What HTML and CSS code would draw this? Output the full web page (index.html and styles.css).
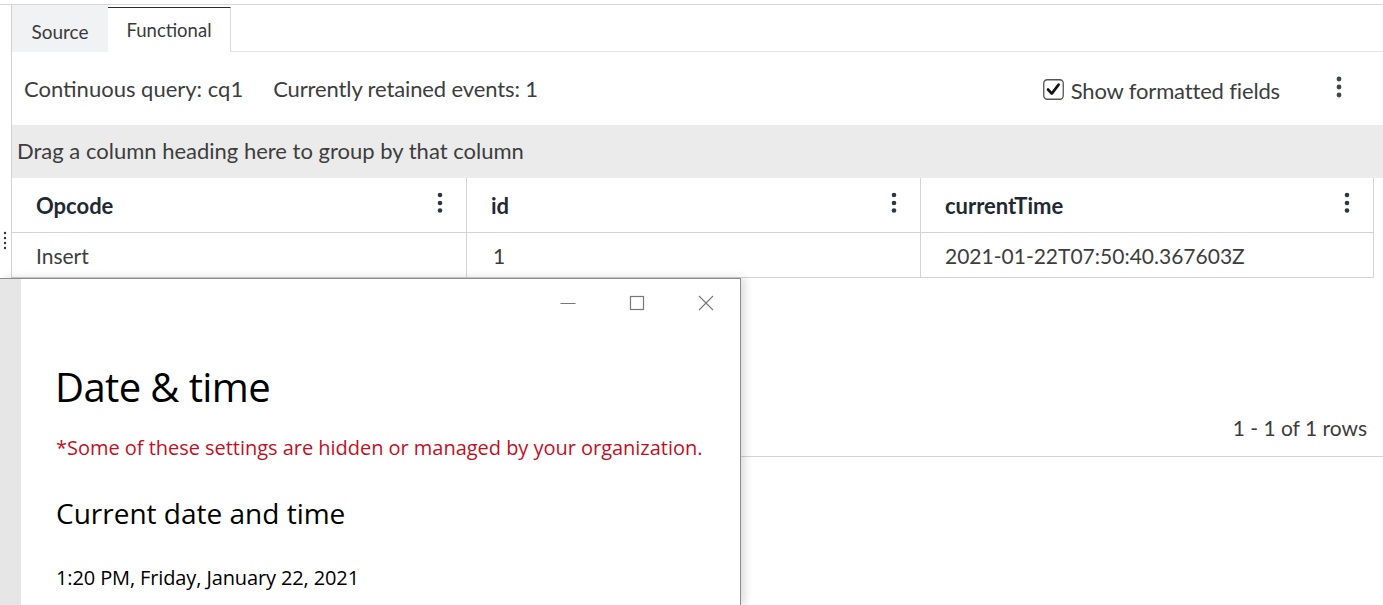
FILE: index.html
```html
<!DOCTYPE html>
<html>
<head>
<meta charset="utf-8">
<link rel="stylesheet" href="styles.css">
</head>
<body>
<div class="page">
  <div class="frame">
    <div class="gutter"></div>
    <div class="main">
      <div class="tabbar">
        <div class="tab tab-source">Source</div>
        <div class="tab tab-active">Functional</div>
        <div class="tab-fill"></div>
      </div>
      <div class="toolbar">
        <span class="info">Continuous query: cq1</span>
        <span class="info info-2">Currently retained events: 1</span>
        <span class="spacer"></span>
        <label class="check">
          <svg class="checkbox" width="21" height="21" viewBox="0 0 21 21"><rect x="0.75" y="0.75" width="19.5" height="19.5" rx="3.5" fill="#fff" stroke="#555" stroke-width="1.3"/><path d="M5 10.5 L8.8 14.6 L15.6 5.6" fill="none" stroke="#111" stroke-width="2.6" stroke-linecap="round" stroke-linejoin="round"/></svg>
          <span class="check-label">Show formatted fields</span>
        </label>
        <svg class="kebab kebab-top" width="6" height="22" viewBox="0 0 6 22"><circle cx="3" cy="3" r="2.4"/><circle cx="3" cy="11" r="2.4"/><circle cx="3" cy="19" r="2.4"/></svg>
      </div>
      <div class="groupbar">Drag a column heading here to group by that column</div>
      <div class="grid">
        <div class="row head">
          <div class="cell"><span>Opcode</span><svg class="kebab" width="6" height="22" viewBox="0 0 6 22"><circle cx="3" cy="3" r="2.3"/><circle cx="3" cy="11" r="2.3"/><circle cx="3" cy="18.5" r="2.3"/></svg></div>
          <div class="cell"><span>id</span><svg class="kebab" width="6" height="22" viewBox="0 0 6 22"><circle cx="3" cy="3" r="2.3"/><circle cx="3" cy="11" r="2.3"/><circle cx="3" cy="18.5" r="2.3"/></svg></div>
          <div class="cell"><span>currentTime</span><svg class="kebab" width="6" height="22" viewBox="0 0 6 22"><circle cx="3" cy="3" r="2.3"/><circle cx="3" cy="11" r="2.3"/><circle cx="3" cy="18.5" r="2.3"/></svg></div>
        </div>
        <div class="row body-row">
          <svg class="handle" width="4" height="22" viewBox="0 0 4 22"><circle cx="2" cy="2" r="1.2"/><circle cx="2" cy="7" r="1.2"/><circle cx="2" cy="12" r="1.2"/><circle cx="2" cy="17" r="1.2"/></svg>
          <div class="cell">Insert</div>
          <div class="cell">1</div>
          <div class="cell">2021-01-22T07:50:40.367603Z</div>
        </div>
      </div>
      <div class="footer"><span>1 - 1 of 1 rows</span></div>
    </div>
  </div>

  <div class="win">
    <div class="win-side"></div>
    <div class="win-body">
      <div class="win-controls">
        <div class="wbtn"><svg width="16" height="16" viewBox="0 0 16 16"><path d="M0.5 8.5 H15.5" stroke="#777" stroke-width="1"/></svg></div>
        <div class="wbtn"><svg width="16" height="16" viewBox="0 0 16 16"><rect x="1.5" y="1.5" width="13" height="13" fill="none" stroke="#777" stroke-width="1.2"/></svg></div>
        <div class="wbtn"><svg width="16" height="16" viewBox="0 0 16 16"><path d="M1 1 L15 15 M15 1 L1 15" stroke="#777" stroke-width="1.1"/></svg></div>
      </div>
      <div class="win-content">
        <h1 class="w-title">Date &amp; time</h1>
        <p class="w-warn">*Some of these settings are hidden or managed by your organization.</p>
        <h2 class="w-sub">Current date and time</h2>
        <p class="w-date">1:20 PM, Friday, January 22, 2021</p>
      </div>
    </div>
  </div>
</div>
</body>
</html>
```
FILE: styles.css
```css
html, body {
  margin: 0;
  padding: 0;
  background: #fff;
}
body {
  font-family: Lato, "Noto Sans", sans-serif;
  color: #3b3b3b;
  width: 1383px;
  height: 605px;
  overflow: hidden;
}
.page {
  position: relative;
  padding-top: 4px;
  height: 601px;
}
.frame {
  display: flex;
  border-top: 1px solid #d6d6d6;
  height: 600px;
}
.gutter {
  width: 11px;
  flex: none;
}
.main {
  flex: 1;
  border-left: 1px solid #d2d2d2;
  display: flex;
  flex-direction: column;
}
.tabbar {
  display: flex;
  height: 47px;
}
.tab {
  display: flex;
  align-items: center;
  justify-content: center;
  color: #3a3a3a;
  box-sizing: border-box;
}
.tab-source {
  width: 96px;
  font-size: 19px;
  background: #f1f2f4;
  padding-top: 7px;
  border-bottom: 1px solid #f1f2f4;
}
.tab-active {
  width: 123px;
  font-size: 18.5px;
  margin-top: 2px;
  border-top: 1px solid #2d2d2d;
  border-right: 1px solid #dcdcdc;
  background: #fff;
  padding-bottom: 1px;
}
.tab-fill {
  flex: 1;
  border-bottom: 1px solid #e2e2e2;
}
.toolbar {
  height: 73px;
  display: flex;
  align-items: center;
  padding: 0 41px 0 12px;
  font-size: 22px;
}
.info {
  color: #3d3d3d;
  margin-top: 0;
}
.info-2 {
  margin-left: 30px;
  letter-spacing: -0.12px;
}
.spacer {
  flex: 1;
}
.check {
  display: flex;
  align-items: center;
  gap: 7px;
  color: #3d3d3d;
  margin-right: 56px;
  padding-top: 3px;
}
.check-label {
  letter-spacing: -0.15px;
}
.checkbox {
  display: block;
  margin-top: -1px;
}
.kebab {
  fill: #2f3640;
  display: block;
}
.kebab-top {
  fill: #3d4652;
  margin-top: -4px;
}
.groupbar {
  height: 53px;
  box-sizing: border-box;
  background: #ebebec;
  display: flex;
  align-items: center;
  padding: 0 0 3px 5px;
  font-size: 22px;
  color: #3d3d3d;
}
.grid {
  width: 1362px;
}
.row {
  display: grid;
  grid-template-columns: 455px 454px 453px;
  position: relative;
}
.head {
  height: 55px;
  border-bottom: 1px solid #d3d3d3;
  box-sizing: border-box;
}
.body-row {
  height: 45px;
  border-bottom: 1px solid #d3d3d3;
  box-sizing: border-box;
}
.cell {
  display: flex;
  align-items: center;
  justify-content: space-between;
  padding: 0 24px 0 24px;
  border-right: 1px solid #d3d3d3;
  font-size: 21px;
  color: #3d3d3d;
  box-sizing: border-box;
}
.head .cell {
  font-weight: 700;
  font-size: 22px;
  color: #1f2933;
  padding-right: 23px;
}
.head .cell .kebab {
  margin-top: -4px;
}
.head .cell span {
  margin-top: 1px;
}
.body-row .cell {
  justify-content: flex-start;
  padding-left: 24px;
}
.body-row .cell:nth-child(3) {
  padding-left: 26px;
}
.handle {
  position: absolute;
  left: -9px;
  top: -2px;
  fill: #333;
}
.footer {
  height: 179px;
  box-sizing: border-box;
  border-bottom: 1px solid #d3d3d3;
  display: flex;
  justify-content: flex-end;
  align-items: flex-end;
  padding: 0 16px 16px 0;
  font-size: 21px;
  color: #3d3d3d;
}

/* Overlaid Windows settings window */
.win {
  position: absolute;
  left: 0;
  top: 278px;
  width: 741px;
  height: 327px;
  display: flex;
  border-top: 1px solid #8c8c8c;
  border-right: 1px solid #8c8c8c;
  box-sizing: border-box;
  background: #fff;
  box-shadow: 4px 0 8px rgba(0,0,0,0.14);
  font-family: "Open Sans", "Noto Sans", sans-serif;
  color: #000;
}
.win-side {
  width: 21px;
  background: #e6e6e6;
  flex: none;
}
.win-body {
  flex: 1;
  display: flex;
  flex-direction: column;
}
.win-controls {
  display: flex;
  justify-content: flex-end;
  height: 48px;
}
.wbtn {
  width: 69px;
  display: flex;
  align-items: center;
  justify-content: center;
}
.wbtn svg {
  display: block;
}
.win-content {
  padding-left: 34px;
}
.w-title {
  margin: 38px 0 0 0;
  font-size: 40px;
  font-weight: 400;
  letter-spacing: -0.6px;
  line-height: 44px;
}
.w-warn {
  margin: 26px 0 0 1px;
  font-size: 20px;
  color: #c50f1f;
  line-height: 26px;
  letter-spacing: -0.03px;
}
.w-sub {
  margin: 35px 0 0 1px;
  font-size: 28px;
  font-weight: 400;
  line-height: 34px;
  letter-spacing: 0;
}
.w-date {
  margin: 35px 0 0 1px;
  font-size: 20px;
  line-height: 26px;
  letter-spacing: -0.12px;
}
```
